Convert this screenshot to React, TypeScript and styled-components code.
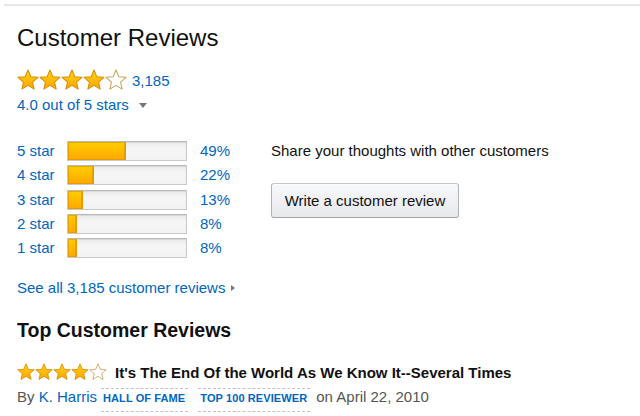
import React, { useId } from 'react'
import styled, { createGlobalStyle } from 'styled-components'

const GlobalStyle = createGlobalStyle`
  html, body {
    margin: 0;
    padding: 0;
    background: #fff;
  }
  body {
    font-family: Arial, "Liberation Sans", sans-serif;
    color: #111;
  }
`;

const Page = styled.div`
  width: 640px;
  height: 416px;
  overflow: hidden;
  padding: 4px 0 0 4px;
  box-sizing: border-box;
`;

const Divider = styled.div`
  height: 2px;
  background: #e7e7e7;
`;

const Content = styled.div`
  padding-left: 13px;
  display: flex;
  flex-direction: column;
`;

const Heading = styled.h2`
  margin: 16px 0 0;
  font-size: 24px;
  line-height: 31px;
  font-weight: 400;
`;

const Link = styled.a`
  color: #0066c0;
  text-decoration: none;
  cursor: pointer;
`;

const RatingRow = styled.div`
  margin-top: 16px;
  display: flex;
  align-items: center;
  height: 22px;
  gap: 5px;
  font-size: 15px;
`;

const Stars = styled.span<{ $size: number }>`
  display: inline-flex;
  gap: ${p => Math.round(p.$size * 0.02)}px;
  svg {
    width: ${p => p.$size}px;
    height: ${p => p.$size}px;
    display: block;
  }
`;

const OutOf = styled.div`
  margin-top: 4px;
  font-size: 15px;
  line-height: 20px;
  display: flex;
  align-items: center;
  gap: 10px;
`;

const Caret = styled.span<{ $dir: 'down' | 'right' }>`
  display: inline-block;
  width: 0;
  height: 0;
  ${p => p.$dir === 'down'
    ? `border-left: 4px solid transparent;
       border-right: 4px solid transparent;
       border-top: 5px solid #777;`
    : `border-top: 3.5px solid transparent;
       border-bottom: 3.5px solid transparent;
       border-left: 4px solid #777;`}
`;

const Summary = styled.div`
  margin-top: 26px;
  display: flex;
  align-items: flex-start;
`;

const Histogram = styled.div`
  display: grid;
  grid-template-columns: 50px 120px 53px;
  row-gap: 4.25px;
  width: 223px;
  font-size: 15px;
`;

const HistLabel = styled(Link)<{ $indent?: number }>`
  line-height: 20px;
  white-space: nowrap;
  padding-left: ${p => p.$indent ?? 0}px;
`;

const Bar = styled.div`
  height: 20px;
  box-sizing: border-box;
  background: linear-gradient(#eaeaea, #f6f6f6 40%, #f3f3f3);
  border: 1px solid #c9c9c9;
  border-top-color: #b9b9b9;
  border-radius: 1px;
  box-shadow: inset 0 1px 1px rgba(0, 0, 0, 0.08);
  overflow: hidden;
`;

const BarFill = styled.div`
  height: 100%;
  background: linear-gradient(#ffce00, #ffa700);
  border-right: 1px solid #e39a00;
  box-shadow: inset 0 0 0 1px rgba(210, 140, 0, 0.55);
  box-sizing: border-box;
`;

const WriteColumn = styled.div`
  margin-left: 31px;
  display: flex;
  flex-direction: column;
  align-items: flex-start;
`;

const ShareText = styled.div`
  font-size: 15px;
  line-height: 20px;
`;

const WriteButton = styled.button`
  margin-top: 22px;
  width: 188px;
  height: 35px;
  font-family: inherit;
  font-size: 15px;
  color: #111;
  background: linear-gradient(#f7f8fa, #e7e9ec);
  border: 1px solid #adb1b8;
  border-color: #c4c6ca #adb1b8 #9fa3a9;
  border-radius: 3px;
  box-shadow: inset 0 1px 0 rgba(255, 255, 255, 0.6);
  cursor: pointer;
`;

const SeeAll = styled(Link)`
  margin-top: 20px;
  font-size: 15px;
  line-height: 20px;
  display: flex;
  align-items: center;
  gap: 6px;
  align-self: flex-start;
`;

const SubHeading = styled.h3`
  margin: 19px 0 0;
  font-size: 19.5px;
  line-height: 26px;
  font-weight: 700;
`;

const ReviewTitleRow = styled.div`
  margin-top: 18px;
  display: flex;
  align-items: center;
  gap: 8px;
  height: 22px;
`;

const ReviewTitle = styled.span`
  font-size: 15px;
  font-weight: 700;
  white-space: nowrap;
`;

const Byline = styled.div`
  margin-top: 5px;
  display: flex;
  align-items: baseline;
  font-size: 15px;
  color: #555;
  white-space: nowrap;
`;

const Badge = styled(Link)<{ $gap: number }>`
  margin-left: ${p => p.$gap}px;
  padding: 3px 3px 7px 2px;
  font-size: 11px;
  font-weight: 700;
  letter-spacing: 0.1px;
  border-top: 1px dashed #c2c2c2;
  border-bottom: 1px dashed #c2c2c2;
`;

const DateText = styled.span`
  margin-left: 6px;
`;

const STAR_POINTS =
  '12,1.1 15.06,8.39 22.94,9.05 16.95,14.21 18.76,21.9 12,17.8 5.24,21.9 7.05,14.21 1.06,9.05 8.94,8.39';

const Star: React.FC<{ filled: boolean }> = ({ filled }) => {
  const id = useId();
  return (
    <svg viewBox="0 0 24 24">
      <defs>
        <linearGradient id={id} x1="0" y1="0" x2="0" y2="1">
          <stop offset="0" stopColor="#ffd814" />
          <stop offset="1" stopColor="#ffa200" />
        </linearGradient>
      </defs>
      <polygon
        points={STAR_POINTS}
        fill={filled ? `url(#${id})` : '#fff'}
        stroke={filled ? '#d88c00' : '#c9a05c'}
        strokeWidth="1.1"
        strokeLinejoin="round"
      />
    </svg>
  );
};

const StarRating: React.FC<{ value: number; size: number }> = ({ value, size }) =>
  <Stars $size={size}>
    {[1, 2, 3, 4, 5].map(n => <Star key={n} filled={n <= value} />)}
  </Stars>

const breakdown = [
  { stars: 5, pct: 49 },
  { stars: 4, pct: 22 },
  { stars: 3, pct: 13 },
  { stars: 2, pct: 8 },
  { stars: 1, pct: 8 },
];

const App: React.FC = () =>
  <Page>
    <GlobalStyle />
    <Divider />
    <Content>
      <Heading>Customer Reviews</Heading>
      <RatingRow>
        <StarRating value={4} size={22} />
        <Link>3,185</Link>
      </RatingRow>
      <OutOf>
        <Link>4.0 out of 5 stars</Link>
        <Caret $dir="down" />
      </OutOf>

      <Summary>
        <Histogram>
          {breakdown.map(row =>
            <React.Fragment key={row.stars}>
              <HistLabel>{row.stars} star</HistLabel>
              <Bar>
                <BarFill style={{ width: `${row.pct}%` }} />
              </Bar>
              <HistLabel $indent={13}>{row.pct}%</HistLabel>
            </React.Fragment>
          )}
        </Histogram>
        <WriteColumn>
          <ShareText>Share your thoughts with other customers</ShareText>
          <WriteButton>Write a customer review</WriteButton>
        </WriteColumn>
      </Summary>

      <SeeAll>
        See all 3,185 customer reviews
        <Caret $dir="right" />
      </SeeAll>

      <SubHeading>Top Customer Reviews</SubHeading>
      <ReviewTitleRow>
        <StarRating value={4} size={18} />
        <ReviewTitle>It's The End Of the World As We Know It--Several Times</ReviewTitle>
      </ReviewTitleRow>
      <Byline>
        By&nbsp;<Link>K. Harris</Link>
        <Badge $gap={4}>HALL OF FAME</Badge>
        <Badge $gap={10}>TOP 100 REVIEWER</Badge>
        <DateText>on April 22, 2010</DateText>
      </Byline>
    </Content>
  </Page>

export default App;
